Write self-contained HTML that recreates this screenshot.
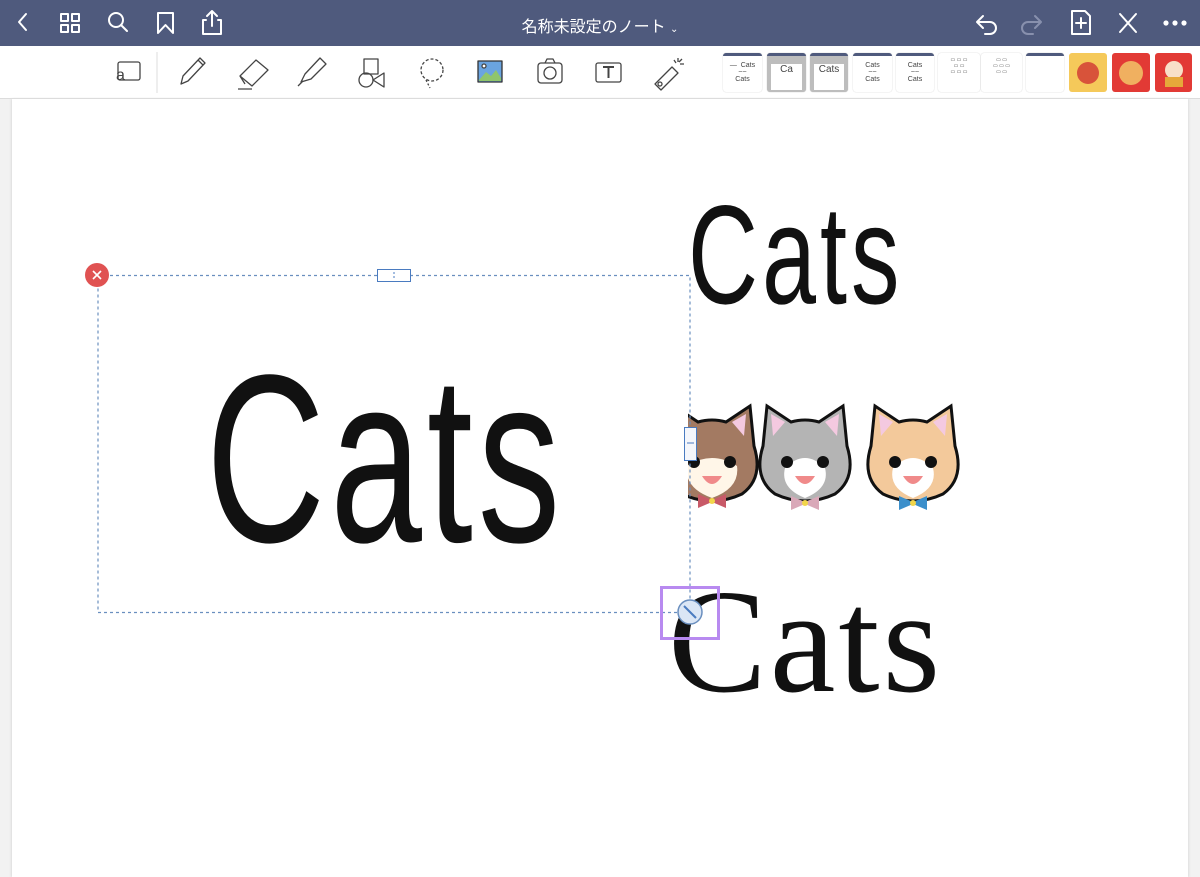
<!DOCTYPE html>
<html><head><meta charset="utf-8"><style>
*{margin:0;padding:0;box-sizing:border-box}
body{width:1200px;height:877px;overflow:hidden;background:#f2f2f2;font-family:"Liberation Sans","Noto Sans CJK JP",sans-serif;position:relative}
.top{position:absolute;left:0;top:0;width:1200px;height:46px;background:#4f5a7d}
.tb{position:absolute;left:0;top:46px;width:1200px;height:53px;background:#fff;border-bottom:1px solid #dcdcdc}
.page{position:absolute;left:12px;top:99px;width:1176px;height:778px;background:#fff;box-shadow:-1px 0 2px #ddd,1px 0 2px #ddd}
.title{position:absolute;left:0;width:1200px;top:13px;text-align:center;color:#fff;font-size:16px}
svg{position:absolute}
.hw{position:absolute;color:#111;font-family:"Liberation Sans",sans-serif;transform-origin:0 100%;line-height:1;white-space:nowrap}
.th{position:absolute;top:53px;height:39px;background:#fff;border-top:3px solid #4f5a7d;border-radius:3px;box-shadow:0 0 1px #bbb;font-size:7px;color:#444;text-align:center}
.th.g{background:#bdbdbd}
</style></head><body>
<div class="top"></div>
<div class="title">名称未設定のノート <span style="font-size:10px">⌄</span></div>
<svg width="1200" height="46" style="left:0;top:0" fill="none" stroke="#fff" stroke-width="2" stroke-linecap="round" stroke-linejoin="round">
<path d="M26 14 L19 22 L26 30"/>
<rect x="61" y="14" width="7" height="7"/><rect x="72" y="14" width="7" height="7"/><rect x="61" y="25" width="7" height="7"/><rect x="72" y="25" width="7" height="7"/>
<circle cx="116" cy="20" r="7"/><path d="M121 25 L127 31"/>
<path d="M158 13 H173 V33 L165.5 25 L158 33 Z"/>
<path d="M206 20 H203 V34 H221 V20 H218 M212 26 V11 M207 16 L212 11 L217 16"/>
<path d="M978 22 H990 A6 6 0 0 1 990 34 H985 M983 16 L977 22 L983 28"/>
<path d="M1040 22 H1028 A6 6 0 0 0 1028 34 H1033 M1035 16 L1041 22 L1035 28" stroke="#8890ad"/>
<path d="M1072 11 H1085 L1090 16 V34 H1072 Z M1081 18 V28 M1076 23 H1086"/>
<path d="M1120 14 L1136 32 M1136 14 L1120 32"/>
<circle cx="1166" cy="23" r="1.6" fill="#fff"/><circle cx="1175" cy="23" r="1.6" fill="#fff"/><circle cx="1184" cy="23" r="1.6" fill="#fff"/>
</svg>
<div class="tb"></div>
<svg width="700" height="53" style="left:0;top:46px" fill="none" stroke="#444" stroke-width="1.3" stroke-linejoin="round">
<rect x="118" y="16" width="22" height="18" rx="2"/><text x="116" y="34" font-size="16" fill="#444" stroke="none">a</text>
<line x1="157" y1="6" x2="157" y2="47" stroke="#e5e5e5"/>
<path d="M181 38 L183 30 L200 12 L205 17 L188 35 Z M198 14 L203 19"/>
<path d="M240 30 L256 14 L268 24 L252 40 Z M240 30 L245 38 M238 43 H252"/>
<path d="M301 36 L305 28 L320 12 L326 18 L311 33 Z M298 40 L303 35"/>
<rect x="364" y="13" width="14" height="15"/><circle cx="366" cy="34" r="7"/><path d="M384 27 L373 34 L384 41 Z"/>
<circle cx="432" cy="24" r="11" stroke-dasharray="3 2"/><path d="M426 34 L430 42" stroke-dasharray="2 2"/>
<rect x="478" y="15" width="24" height="21" fill="#6aa4e0" stroke="#333"/><path d="M479 34 L486 26 L491 30 L496 24 L501 32 V35 H479 Z" fill="#8fc56c" stroke="none"/><circle cx="484" cy="20" r="2" fill="#fff"/>
<rect x="538" y="17" width="24" height="20" rx="3"/><circle cx="550" cy="27" r="6"/><path d="M545 17 L547 13 H553 L555 17"/>
<rect x="596" y="17" width="25" height="19" rx="2"/><path d="M603 21 H614 M608.5 21 V32" stroke-width="2"/>
<path d="M655 38 L672 21 L678 27 L661 44 Z"/><circle cx="660" cy="38" r="2"/><path d="M678 12 V16 M684 18 H680 M682 13 L679 16 M674 14 L676 17"/>
</svg>
<div class="th" style="left:723px;width:39px;padding-top:6px">―&nbsp; Cats<br>~~<br>Cats</div>
<div class="th g" style="left:767px;width:39px;padding-top:8px"><div style="background:#fff;margin:0 4px;height:26px;font-size:10px">Ca</div></div>
<div class="th g" style="left:810px;width:38px;padding-top:8px"><div style="background:#fff;margin:0 4px;height:26px;font-size:10px">Cats</div></div>
<div class="th" style="left:853px;width:39px;padding-top:6px">Cats<br>~~<br>Cats</div>
<div class="th" style="left:896px;width:38px;padding-top:6px">Cats<br>~~<br>Cats</div>
<div class="th" style="left:938px;width:42px;border-top:0;font-size:5px;padding-top:4px">▭ ▭ ▭<br>▭ ▭<br>▭ ▭ ▭</div>
<div class="th" style="left:981px;width:41px;border-top:0;font-size:5px;padding-top:4px">▭ ▭<br>▭ ▭ ▭<br>▭ ▭</div>
<div class="th" style="left:1026px;width:38px"></div>
<div style="position:absolute;left:1069px;top:53px;width:38px;height:39px;background:#f5c95a;border-radius:3px"></div>
<div style="position:absolute;left:1112px;top:53px;width:38px;height:39px;background:#e23a35;border-radius:3px"></div>
<div style="position:absolute;left:1155px;top:53px;width:37px;height:39px;background:#e23a35;border-radius:3px"></div>
<svg width="130" height="40" style="left:1069px;top:53px">
<circle cx="19" cy="20" r="11" fill="#d8533a"/><circle cx="62" cy="20" r="12" fill="#f0b060"/><circle cx="105" cy="17" r="9" fill="#f8e0c8"/><rect x="96" y="24" width="18" height="10" fill="#e6a83a"/>
</svg>
<div class="page"></div>

<div class="hw" style="left:206px;top:414px;font-size:165px;transform:scale(1,1.45);letter-spacing:5px">Cats</div>
<div class="hw" style="left:688px;top:228px;font-size:97px;transform:scale(1,1.45);letter-spacing:4px">Cats</div>
<div style="position:absolute;left:668px;top:568px;font-family:'Liberation Serif',serif;font-size:148px;line-height:1;color:#111;letter-spacing:3px">Cats</div>

<svg width="1200" height="877" style="left:0;top:0">
<g transform="translate(805,458)">
<path d="M-42 -12 L-38 -52 L-14 -36 Q0 -40 14 -36 L38 -52 L42 -12 Q52 20 30 36 Q0 50 -30 36 Q-52 20 -42 -12 Z" fill="#b4b4b4" stroke="#111" stroke-width="3"/>
<path d="M-20 10 Q0 -10 20 10 Q25 30 0 40 Q-25 30 -20 10Z" fill="#fff"/>
<path d="M-34 -44 L-20 -36 L-32 -22Z M34 -44 L20 -36 L32 -22Z" fill="#f4c9e0"/>
<circle cx="-18" cy="4" r="6" fill="#111"/><circle cx="18" cy="4" r="6" fill="#111"/>
<path d="M-10 18 Q0 34 10 18 Z" fill="#f08a8a"/>
<path d="M-14 38 L0 44 L14 38 L14 52 L0 46 L-14 52Z" fill="#d9a8b8"/><circle cx="0" cy="45" r="3" fill="#f2d64a"/>
</g>
<g transform="translate(913,458)">
<path d="M-42 -12 L-38 -52 L-14 -36 Q0 -40 14 -36 L38 -52 L42 -12 Q52 20 30 36 Q0 50 -30 36 Q-52 20 -42 -12 Z" fill="#f3c99b" stroke="#111" stroke-width="3"/>
<path d="M-20 10 Q0 -10 20 10 Q25 30 0 40 Q-25 30 -20 10Z" fill="#fff"/>
<path d="M-34 -44 L-20 -36 L-32 -22Z M34 -44 L20 -36 L32 -22Z" fill="#f4c9e0"/>
<circle cx="-18" cy="4" r="6" fill="#111"/><circle cx="18" cy="4" r="6" fill="#111"/>
<path d="M-10 18 Q0 34 10 18 Z" fill="#f08a8a"/>
<path d="M-14 38 L0 44 L14 38 L14 52 L0 46 L-14 52Z" fill="#3b8fcb"/><circle cx="0" cy="45" r="3" fill="#f2d64a"/>
</g>
<clipPath id="cl"><rect x="688" y="380" width="100" height="140"/></clipPath>
<g clip-path="url(#cl)"><g transform="translate(712,458)">
<path d="M-42 -12 L-38 -52 L-14 -36 Q0 -40 14 -36 L38 -52 L42 -12 Q52 20 30 36 Q0 50 -30 36 Q-52 20 -42 -12 Z" fill="#a37a62" stroke="#111" stroke-width="3"/>
<path d="M-25 8 Q0 -8 25 8 Q28 30 0 40 Q-28 30 -25 8Z" fill="#fff6e8"/>
<path d="M34 -44 L20 -36 L32 -22Z" fill="#f4c9e0"/>
<circle cx="-18" cy="4" r="6" fill="#111"/><circle cx="18" cy="4" r="6" fill="#111"/>
<path d="M-10 18 Q0 34 10 18 Z" fill="#f08a8a"/>
<path d="M-14 36 L0 42 L14 36 L14 50 L0 44 L-14 50Z" fill="#c85a68"/><circle cx="0" cy="43" r="3" fill="#f2d64a"/>
</g></g>

<rect x="98" y="275.5" width="592" height="337" fill="none" stroke="#6a8fbf" stroke-width="1.2" stroke-dasharray="3 3"/>
<circle cx="97" cy="275" r="12" fill="#e05252"/><path d="M93 271 L101 279 M101 271 L93 279" stroke="#fff" stroke-width="1.6"/>
<rect x="377.5" y="269.5" width="33" height="12" fill="#fff" stroke="#4a7bc0"/><path d="M394 272 V279" stroke="#4a7bc0" stroke-width="1" stroke-dasharray="2 2"/>
<rect x="684.5" y="427.5" width="12" height="33" fill="#f4f6fb" stroke="#4a7bc0"/><path d="M687 443 H694" stroke="#4a7bc0"/>
<rect x="661.5" y="587.5" width="57" height="51" fill="none" stroke="#b88af0" stroke-width="3"/>
<circle cx="690" cy="612" r="12" fill="#dbe6f5" stroke="#6a8fbf" stroke-width="1.5"/><path d="M684 606 L696 618" stroke="#4a7bc0" stroke-width="2"/>
</svg>
</body></html>
